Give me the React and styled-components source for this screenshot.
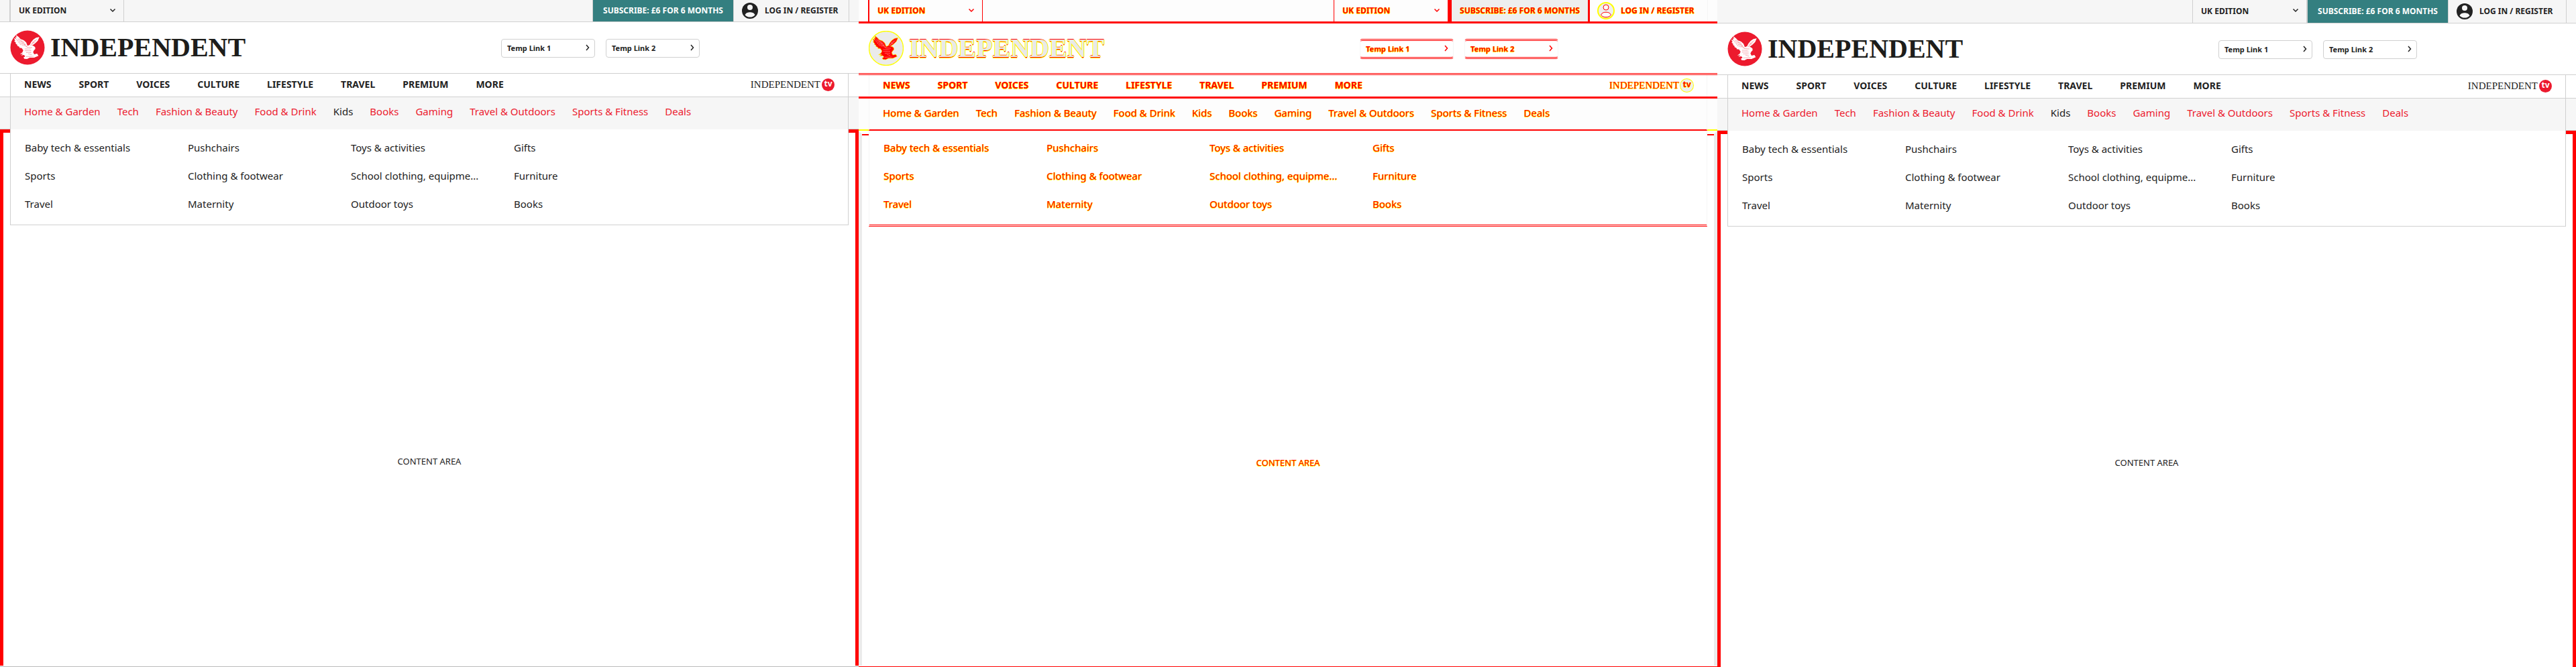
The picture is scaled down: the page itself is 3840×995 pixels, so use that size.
import React from "react";
import styled, { createGlobalStyle, css, ThemeProvider } from "styled-components";

const sans = '"Noto Sans", "Open Sans", sans-serif';
const serif = '"Liberation Serif", "Times New Roman", serif';
const fringe = "1px 0 #ff0, 0 1px #ff0";

const base = {
  diff: false,
  line: "#d0d0d0",
  subLine: "#d0d0d0",
  bar: "#f6f6f6",
  ink: "#222",
  word: "#1d1d1b",
  red: "#ec1a2e",
  accentBg: "#347f80",
  accentInk: "#fff",
  eagle: "#fff",
  edge: "#d0d0d0",
  frame: "#f00",
  shadow: "none",
  rule: 1,
  gutter: 14,
};

const before = { ...base, topHeight: 33, loginWidth: 172, leftEdition: true, rightEdition: false, pageEnd: "#bbb" };
const after = { ...base, topHeight: 35, loginWidth: 176, leftEdition: false, rightEdition: true, pageEnd: null };
const changes = {
  ...base,
  diff: true,
  line: "#f00",
  subLine: "#ff0",
  bar: "#fdfdfd",
  ink: "#f00",
  word: "#e9e9e9",
  red: "#f00",
  accentBg: "#eee",
  accentInk: "#f00",
  eagle: "#f00",
  edge: "#f6f6f6",
  frame: "#ebebeb",
  shadow: fringe,
  rule: 3,
  topHeight: 35,
  loginWidth: 176,
  leftEdition: true,
  rightEdition: true,
  pageEnd: "#f00",
};

const GlobalStyle = createGlobalStyle`
  *, *::before, *::after { box-sizing: border-box; }
  body { margin: 0; background: #fff; font-family: ${sans}; }
  a { color: inherit; text-decoration: none; }
`;

const Board = styled.div`
  display: flex;
  height: 100vh;
`;

const Panel = styled.section`
  position: relative;
  display: flex;
  flex-direction: column;
  flex: 1 1 0;
  min-width: 0;
  overflow: hidden;
  background: #fff;
  color: ${(p) => p.theme.ink};
  text-shadow: ${(p) => p.theme.shadow};
`;

const PageEnd = styled.div`
  position: absolute;
  inset: auto 0 0 0;
  height: 2px;
  background: #fff;
  border-bottom: 1px solid ${(p) => p.theme.pageEnd};
`;

const ruled = css`
  border-bottom: ${(p) => p.theme.rule}px solid ${(p) => p.theme.line};
`;

const doubleRuled = css`
  ${ruled}
  ${(p) => p.theme.diff && "border-bottom-style: double;"}
`;

const TopBar = styled.div`
  flex: none;
  display: flex;
  height: ${(p) => p.theme.topHeight}px;
  padding: 0 ${(p) => p.theme.gutter}px;
  background: ${(p) => p.theme.bar};
  ${ruled}
  font-size: 12px;
  font-weight: 700;
`;

const Edition = styled.div`
  position: relative;
  display: flex;
  width: 171px;
  margin-left: ${(p) => (p.$right ? "auto" : "0")};
  border: solid ${(p) => p.theme.line};
  border-width: 0 1px 0 ${(p) => (p.$right ? 1 : 2)}px;

  select {
    appearance: none;
    width: 100%;
    padding: 0 0 2px 12px;
    border: 0;
    border-radius: 0;
    background: transparent;
    color: inherit;
    font: inherit;
    text-shadow: inherit;
  }
  svg {
    position: absolute;
    right: 11px;
    top: 12px;
    pointer-events: none;
  }
`;

const Subscribe = styled.a`
  display: flex;
  align-items: center;
  justify-content: center;
  width: 211px;
  padding-bottom: 2px;
  margin-left: ${(p) => (p.theme.rightEdition ? "0" : "auto")};
  background: ${(p) => p.theme.accentBg};
  color: ${(p) => p.theme.accentInk};
  border: solid ${(p) => p.theme.line};
  border-width: 0 ${(p) => p.theme.rule}px 0 ${(p) => (p.theme.diff ? 5 : 1)}px;
`;

const Login = styled.a`
  display: flex;
  align-items: center;
  gap: 10px;
  width: ${(p) => p.theme.loginWidth}px;
  padding-left: 12px;
  border-right: 1px solid ${(p) => p.theme.edge};
  white-space: nowrap;

  span { padding-bottom: 2px; }
`;

const Masthead = styled.header`
  flex: none;
  display: flex;
  align-items: center;
  justify-content: space-between;
  height: 77px;
  padding: 0 237px 0 15px;
  ${doubleRuled}
`;

const Brand = styled.a`
  display: flex;
  align-items: center;
  gap: 8px;
`;

const Wordmark = styled.span`
  font-family: ${serif};
  font-size: ${(p) => (p.$small ? 15 : 40)}px;
  font-weight: ${(p) => (p.$small ? 400 : 700)};
  line-height: 1;
  color: ${(p) => (p.$small ? p.theme.ink : p.theme.word)};
  ${(p) => p.theme.diff && !p.$small && "text-shadow: 1px 0 #ff0, -1px 0 #ff0, 0 -1px #f00, 0 1px #f00, 0 2px #ff0;"}
`;

const QuickLinks = styled.div`
  display: flex;
  gap: 16px;
  padding-top: 2px;
`;

const QuickLink = styled.a`
  display: flex;
  align-items: center;
  justify-content: space-between;
  width: 140px;
  height: ${(p) => (p.theme.diff ? 30 : 28)}px;
  padding: 0 7px 2px 8px;
  border: 1px solid ${(p) => p.theme.edge};
  border-radius: 4px;
  ${(p) =>
    p.theme.diff &&
    css`
      border-top: 3px double #f00;
      border-bottom: 3px double #f00;
    `}
  font-size: 11px;
  font-weight: 700;
`;

const NavBar = styled.div`
  flex: none;
  padding: 0 15px;
  ${ruled}
`;

const NavInner = styled.nav`
  display: flex;
  align-items: center;
  gap: 41px;
  height: ${(p) => 35 - p.theme.rule}px;
  padding: 0 20px 4px;
  border: solid ${(p) => p.theme.edge};
  border-width: 0 1px;
  font-size: 14px;
  font-weight: 700;
`;

const TvLink = styled.a`
  display: flex;
  align-items: center;
  gap: 2px;
  margin-left: auto;
  padding-top: 2px;
`;

const TvBadge = styled.span`
  display: flex;
  align-items: center;
  justify-content: center;
  width: 19px;
  height: 19px;
  padding-bottom: 2px;
  border-radius: 50%;
  background: ${(p) => (p.theme.diff ? "#eee" : p.theme.red)};
  ${(p) => p.theme.diff && "box-shadow: 0 0 0 1px #ff0;"}
  color: ${(p) => (p.theme.diff ? "#f00" : "#fff")};
  font-size: 12px;
  line-height: 1;
`;

const SubBar = styled.div`
  flex: none;
  padding: 0 15px;
  background: ${(p) => p.theme.bar};
  border-bottom: ${(p) => (p.theme.diff ? 2 : 1)}px solid ${(p) => p.theme.subLine};
`;

const SubInner = styled.nav`
  position: relative;
  z-index: 1;
  display: flex;
  align-items: center;
  gap: 25px;
  height: 48px;
  margin-bottom: -${(p) => (p.theme.diff ? 2 : 1)}px;
  padding: 0 20px ${(p) => (p.theme.diff ? 4 : 6)}px;
  background: ${(p) => p.theme.bar};
  border: solid ${(p) => p.theme.edge};
  border-width: 0 1px;
  ${(p) => p.theme.diff && "border-bottom: 2px solid #f00;"}
  font-size: 15px;
  white-space: nowrap;
`;

const SubLink = styled.a`
  color: ${(p) => (p.$current ? p.theme.ink : p.theme.red)};
`;

const Menu = styled.div`
  position: absolute;
  top: 100%;
  left: -1px;
  right: -1px;
  display: grid;
  grid-template-columns: repeat(5, 1fr);
  grid-auto-rows: 42px;
  align-items: center;
  height: 143px;
  margin-top: ${(p) => (p.theme.diff ? 2 : 0)}px;
  padding: ${(p) => (p.theme.diff ? 4 : 6)}px 12px 0 21px;
  background: #fff;
  border: 1px solid ${(p) => p.theme.edge};
  border-top: 0;
  ${doubleRuled}

  a:nth-child(4n + 1) { grid-column: 1; }
`;

const Content = styled.main`
  flex: none;
  display: flex;
  align-items: center;
  justify-content: center;
  height: 990px;
  border: 5px solid ${(p) => p.theme.frame};
  ${(p) => p.theme.diff && "border-top-color: #fff; box-shadow: inset 0 2px #f00;"}
  font-size: 13px;
`;

const EmblemSvg = styled.svg`
  flex: none;
  .disc {
    fill: ${(p) => (p.theme.diff ? "#ebebeb" : p.theme.red)};
    stroke: ${(p) => (p.theme.diff ? "#ff0" : "none")};
    stroke-width: 4;
  }
  .bird {
    fill: ${(p) => p.theme.eagle};
    stroke: ${(p) => (p.theme.diff ? "#ff0" : "none")};
    stroke-width: 2;
  }
  .feather {
    fill: none;
    stroke: ${(p) => (p.theme.diff ? "#fff" : p.theme.red)};
    stroke-width: 1.6;
    stroke-dasharray: 4 2;
  }
`;

function Emblem() {
  return (
    <EmblemSvg width="52" height="52" viewBox="0 0 156 156" aria-hidden="true">
      <circle className="disc" cx="78" cy="78" r="76.5" />
      <path
        className="bird"
        d="M27 22 L29 34 L23 29 L26 40 L17 35 L23 47 L18 48 L27 57 L24 59 L33 66 L31 69 L42 75 L41 79 L52 80 L59 90 L55 100 L44 107 L58 106 L49 113 L62 111 L68 117 L60 122 L64 128 L76 129 L88 123 L108 123 L127 115 L121 105 L108 108 L103 98 L107 90 L113 84 L112 76 L104 70 L98 69 L111 60 L124 47 L131 31 L116 34 L104 42 L94 54 L88 66 L78 70 L72 55 L61 45 L47 40 L38 30 Z"
      />
      <path
        className="feather"
        d="M28 40 L50 68 M34 38 L58 70 M40 38 L66 72 M48 44 L72 74 M56 48 L76 76 M104 50 L92 70 M112 44 L98 64 M120 40 L104 60 M66 84 L92 84 M66 92 L96 92 M72 100 L96 100 M76 76 L98 78 M82 106 L96 110 M72 118 L104 117"
      />
    </EmblemSvg>
  );
}

function Chevron({ right }) {
  return right ? (
    <svg width="6" height="10" viewBox="0 0 6 10" aria-hidden="true">
      <path d="M1 1 L4.5 5 L1 9" fill="none" stroke="currentColor" strokeWidth="1.5" />
    </svg>
  ) : (
    <svg width="10" height="7" viewBox="0 0 10 7" aria-hidden="true">
      <path d="M1.5 1.5 L5 5 L8.5 1.5" fill="none" stroke="currentColor" strokeWidth="1.5" />
    </svg>
  );
}

const AvatarSvg = styled.svg`
  flex: none;
  overflow: visible;
  circle:first-child {
    fill: ${(p) => (p.theme.diff ? "#eee" : "#222")};
  }
  * {
    stroke: ${(p) => (p.theme.diff ? "#ff0" : "none")};
    stroke-width: 2;
  }
  .cut {
    fill: ${(p) => p.theme.bar};
    ${(p) => p.theme.diff && "stroke: #f00; stroke-width: 1;"}
  }
`;

function Avatar() {
  return (
    <AvatarSvg width="24" height="24" viewBox="0 0 24 24" aria-hidden="true">
      <circle cx="12" cy="12" r="12" />
      <circle className="cut" cx="12" cy="7" r="4" />
      <path className="cut" d="M4.5 18.3 C6 15 9 14.2 12 14.2 S18 15 19.5 18.3 C17.5 20.8 15 21.6 12 21.6 S6.5 20.8 4.5 18.3 Z" />
    </AvatarSvg>
  );
}

function EditionPicker({ right }) {
  return (
    <Edition $right={right}>
      <select aria-label="Edition">
        <option>UK EDITION</option>
      </select>
      <Chevron />
    </Edition>
  );
}

const sections = ["NEWS", "SPORT", "VOICES", "CULTURE", "LIFESTYLE", "TRAVEL", "PREMIUM", "MORE"];
const topics = [
  "Home & Garden", "Tech", "Fashion & Beauty", "Food & Drink", "Kids",
  "Books", "Gaming", "Travel & Outdoors", "Sports & Fitness", "Deals",
];
const kids = [
  "Baby tech & essentials", "Pushchairs", "Toys & activities", "Gifts",
  "Sports", "Clothing & footwear", "School clothing, equipme...", "Furniture",
  "Travel", "Maternity", "Outdoor toys", "Books",
];

function Page({ theme }) {
  return (
    <ThemeProvider theme={theme}>
      <Panel>
        <TopBar>
          {theme.leftEdition && <EditionPicker />}
          {theme.rightEdition && <EditionPicker right />}
          <Subscribe href="#">SUBSCRIBE: £6 FOR 6 MONTHS</Subscribe>
          <Login href="#">
            <Avatar />
            <span>LOG IN / REGISTER</span>
          </Login>
        </TopBar>
        <Masthead>
          <Brand href="#">
            <Emblem />
            <Wordmark>INDEPENDENT</Wordmark>
          </Brand>
          <QuickLinks>
            <QuickLink href="#">Temp Link 1<Chevron right /></QuickLink>
            <QuickLink href="#">Temp Link 2<Chevron right /></QuickLink>
          </QuickLinks>
        </Masthead>
        <NavBar>
          <NavInner>
            {sections.map((s) => <a key={s} href="#">{s}</a>)}
            <TvLink href="#">
              <Wordmark $small>INDEPENDENT</Wordmark>
              <TvBadge>tv</TvBadge>
            </TvLink>
          </NavInner>
        </NavBar>
        <SubBar>
          <SubInner>
            {topics.map((t) => <SubLink key={t} href="#" $current={t === "Kids"}>{t}</SubLink>)}
            <Menu>
              {kids.map((k) => <a key={k} href="#">{k}</a>)}
            </Menu>
          </SubInner>
        </SubBar>
        <Content>CONTENT AREA</Content>
        {theme.pageEnd && <PageEnd />}
      </Panel>
    </ThemeProvider>
  );
}

export default function App() {
  return (
    <>
      <GlobalStyle />
      <Board>
        <Page theme={before} />
        <Page theme={changes} />
        <Page theme={after} />
      </Board>
    </>
  );
}
